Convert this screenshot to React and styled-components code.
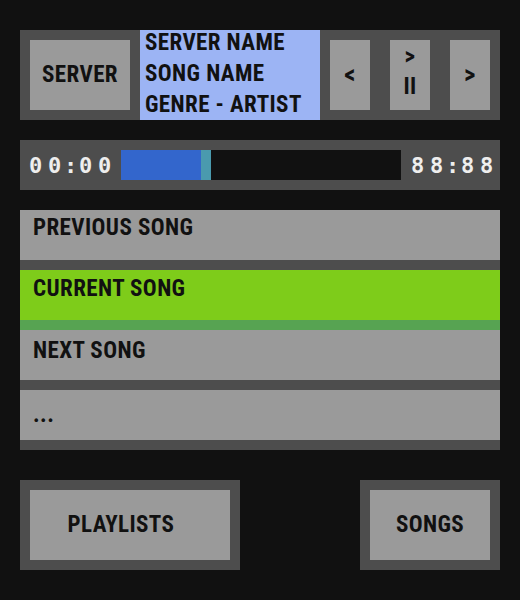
import React from "react";
import styled, { createGlobalStyle } from "styled-components";

const GlobalStyle = createGlobalStyle`
  html, body {
    margin: 0;
    padding: 0;
    background: #111111;
  }
  body {
    font-family: "Roboto Condensed", "DejaVu Sans Condensed", sans-serif;
    font-weight: 700;
    color: #111111;
  }
`;

// pad = distance of the text from the top of its row
const songs = [
  { title: "PREVIOUS SONG", pad: 5 },
  { title: "CURRENT SONG", pad: 6 },
  { title: "NEXT SONG", pad: 8 },
  { title: "...", pad: 12 },
];

function Clock({ value }) {
  return (
    <Time>
      {value.split("").map((c, i) =>
        c === ":" ? <Colon key={i}>{c}</Colon> : <Digit key={i}>{c}</Digit>
      )}
    </Time>
  );
}

function App() {
  return (
    <>
      <GlobalStyle />
      <Page>
        <TopBar>
          <Panel>
            <GreyButton $w={100}>SERVER</GreyButton>
          </Panel>
          <Info>
            <span>SERVER NAME</span>
            <span>SONG NAME</span>
            <span>GENRE - ARTIST</span>
          </Info>
          <Controls>
            <GreyButton $w={40} $big>&lt;</GreyButton>
            <GreyButton $w={40} $stack>
              <span>&gt;</span>
              <span>II</span>
            </GreyButton>
            <GreyButton $w={40} $big>&gt;</GreyButton>
          </Controls>
        </TopBar>

        <Progress>
          <Clock value="00:00" />
          <Track>
            <Fill style={{ width: 80 }} />
            <Knob />
          </Track>
          <Clock value="88:88" />
        </Progress>

        <List>
          {songs.map((s) => (
            <Row key={s.title} $current={s.title.startsWith("CURRENT")}>
              <RowBody $current={s.title.startsWith("CURRENT")} $pad={s.pad}>
                {s.title}
              </RowBody>
            </Row>
          ))}
        </List>

        <BottomBar>
          <Panel>
            <GreyButton $w={200} $shift={18}>PLAYLISTS</GreyButton>
          </Panel>
          <Panel>
            <GreyButton $w={120}>SONGS</GreyButton>
          </Panel>
        </BottomBar>
      </Page>
    </>
  );
}

const Page = styled.div`
  width: 480px;
  padding: 30px 20px;
  display: flex;
  flex-direction: column;
`;

const TopBar = styled.div`
  display: flex;
  height: 90px;
`;

const Panel = styled.div`
  background: #4d4d4d;
  padding: 10px;
  display: flex;
`;

const GreyButton = styled.div`
  width: ${(p) => p.$w}px;
  height: 70px;
  box-sizing: border-box;
  padding: ${(p) => (p.$stack ? "2px 0 8px" : `0 ${p.$shift || 0}px 0 0`)};
  background: #9a9a9a;
  display: flex;
  flex-direction: ${(p) => (p.$stack ? "column" : "row")};
  align-items: center;
  justify-content: ${(p) => (p.$stack ? "space-around" : "center")};
  font-size: ${(p) => (p.$big ? 25 : 23)}px;
  line-height: 24px;
  letter-spacing: 0.4px;
`;

const Info = styled.div`
  width: 180px;
  background: #9cb4f4;
  display: flex;
  flex-direction: column;
  justify-content: space-between;
  padding: 0 5px 2px;
  box-sizing: border-box;
  font-size: 23px;
  line-height: 26px;
  letter-spacing: 0.4px;
  white-space: nowrap;
`;

const Controls = styled(Panel)`
  flex: 1;
  justify-content: space-between;
`;

const Progress = styled.div`
  margin-top: 20px;
  height: 50px;
  background: #4d4d4d;
  display: flex;
  align-items: center;
  padding: 0 4px 0 6px;
  box-sizing: border-box;
  justify-content: space-between;
`;

const Time = styled.span`
  display: flex;
  font-family: "DejaVu Sans Mono", monospace;
  font-weight: bold;
  font-size: 22px;
  color: #eeeeee;
`;

const Digit = styled.span`
  width: 19px;
  text-align: center;
`;

const Colon = styled.span`
  width: 12px;
  text-align: center;
`;

const Track = styled.div`
  width: 280px;
  height: 30px;
  background: #111111;
  display: flex;
`;

const Fill = styled.div`
  background: #3366cc;
`;

const Knob = styled.div`
  width: 10px;
  background: #4a9aae;
`;

const List = styled.div`
  margin-top: 20px;
  display: flex;
  flex-direction: column;
`;

const Row = styled.div`
  background: ${(p) => (p.$current ? "#57a352" : "#4d4d4d")};
  padding-bottom: 10px;
`;

const RowBody = styled.div`
  height: 50px;
  box-sizing: border-box;
  padding: ${(p) => p.$pad}px 13px 0;
  background: ${(p) => (p.$current ? "#7ecc1a" : "#9a9a9a")};
  font-size: 23px;
  line-height: 26px;
  letter-spacing: 0.4px;
`;

const BottomBar = styled.div`
  margin-top: 30px;
  display: flex;
  justify-content: space-between;
`;

export default App;
